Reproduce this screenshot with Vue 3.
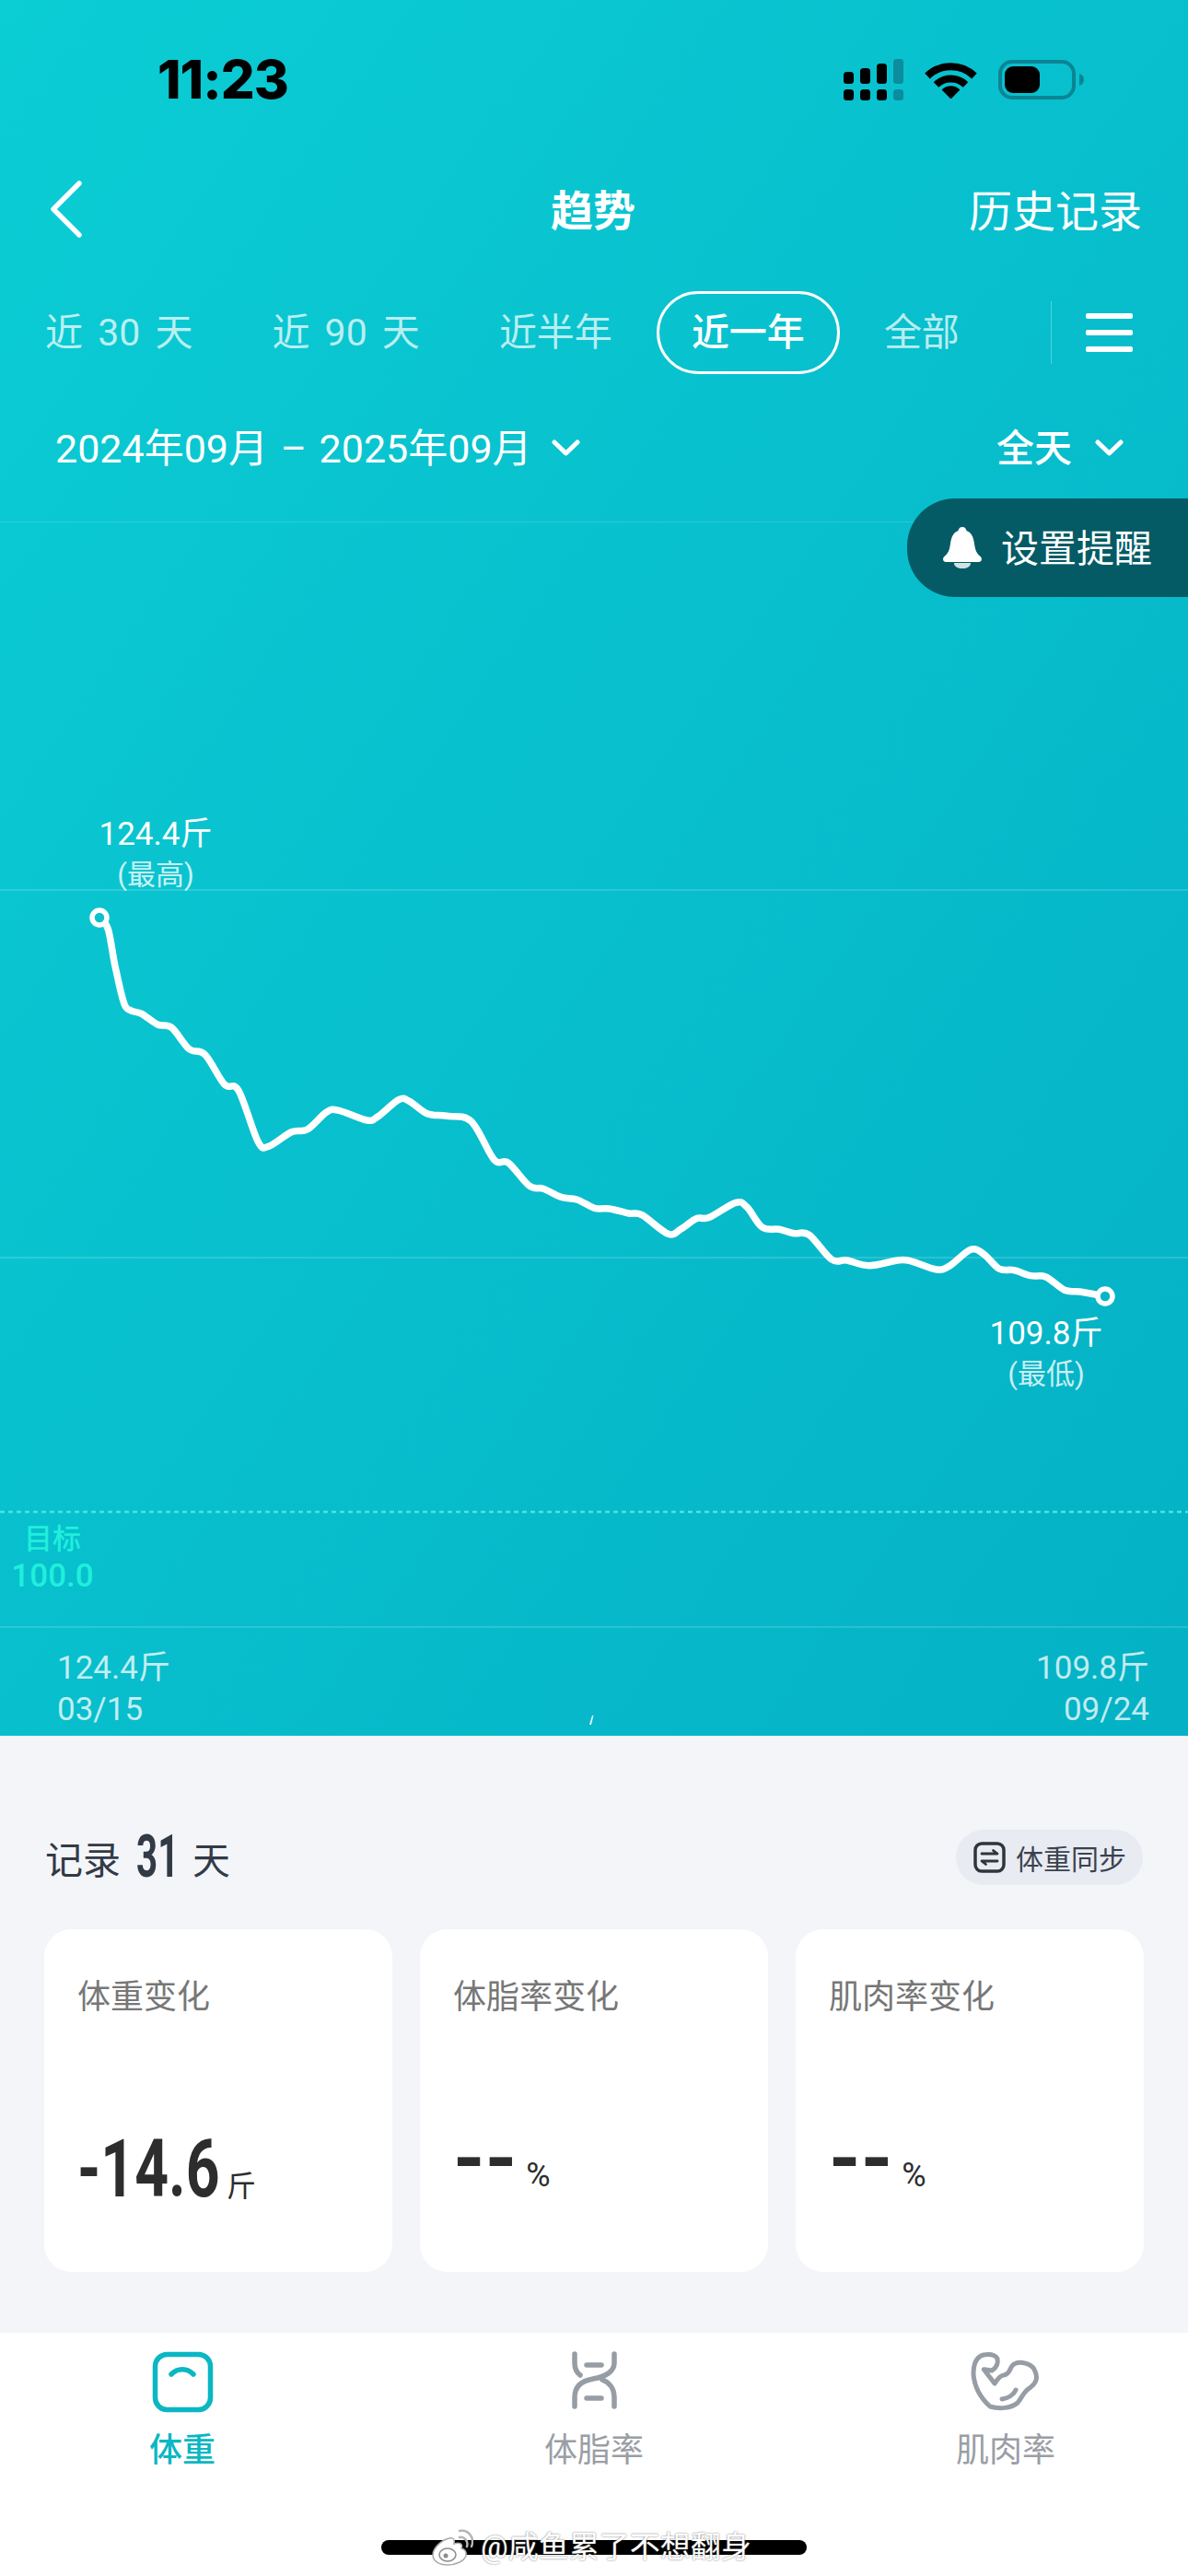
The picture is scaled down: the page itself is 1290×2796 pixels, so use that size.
<template>
    <div class="page">
        <div class="panel">
            <div class="status">
                <span class="time">11:23</span>
                <div class="status-icons">
                    <svg width="65" height="45" viewBox="0 0 65 45">
                        <rect v-for="b in signalBars" :key="b.x + '-' + b.y" :x="b.x" :y="b.y" width="11" :height="b.h" rx="3.5" :fill="b.dim ? '#0b8d9e' : '#000'" />
                    </svg>
                    <svg width="57" height="42" viewBox="0 0 57 42">
                        <path d="M3 17.5A37 37 0 0 1 54 17.5" fill="none" stroke="#000" stroke-width="8" />
                        <path d="M12.5 27A23 23 0 0 1 44.500 27" fill="none" stroke="#000" stroke-width="8" />
                        <path d="M28.500 41L20 32.500A13 13 0 0 1 37 32.500Z" fill="#000" stroke="#000" stroke-width="2" stroke-linejoin="round" />
                    </svg>
                    <svg width="93" height="43" viewBox="0 0 93 43">
                        <rect x="2" y="2" width="80" height="39" rx="13" fill="none" stroke="#0b8494" stroke-width="4" />
                        <rect x="7" y="7" width="38" height="29" rx="9" fill="#000" />
                        <path d="M88 15C91 16 93 18 93 21.500C93 25 91 27 88 28Z" fill="#0b8494" />
                    </svg>
                </div>
            </div>

            <div class="nav">
                <svg class="back" width="36" height="62" viewBox="0 0 36 62">
                    <path d="M32 3L4 31L32 59" fill="none" stroke="#fff" stroke-width="5.500" stroke-linecap="round" stroke-linejoin="round" />
                </svg>
                <div class="title">趋势</div>
                <div class="history">历史记录</div>
            </div>

            <div class="periods">
                <div v-for="p in periods" :key="p" class="period" :class="{ active: p === activePeriod }">{{ p }}</div>
                <div class="menu">
                    <span></span>
                    <span></span>
                    <span></span>
                </div>
            </div>

            <div class="dates">
                <div class="date-pick">
                    <span>2024年09月 – 2025年09月</span>
                    <svg class="caret" width="31" height="19" viewBox="0 0 31 19">
                        <path d="M3 3L15.500 15L28 3" fill="none" stroke="#fff" stroke-width="5" stroke-linecap="round" stroke-linejoin="round" />
                    </svg>
                </div>
                <div class="date-pick day">
                    <span>全天</span>
                    <svg class="caret" width="31" height="19" viewBox="0 0 31 19">
                        <path d="M3 3L15.500 15L28 3" fill="none" stroke="#fff" stroke-width="5" stroke-linecap="round" stroke-linejoin="round" />
                    </svg>
                </div>
            </div>

            <div class="chart">
                <svg class="plot" width="1290" height="1320" viewBox="0 564 1290 1320">
                    <line v-for="y in gridLines" :key="y" x1="0" x2="1290" :y1="y" :y2="y" stroke="rgba(255,255,255,0.2)" stroke-width="1.500" />
                    <line x1="0" x2="1290" y1="1639" y2="1639" stroke="#45e6df" stroke-width="2.500" stroke-dasharray="5 4" />
                    <path :d="linePath" fill="none" stroke="#fff" stroke-width="7.500" stroke-linecap="round" stroke-linejoin="round" />
                    <circle cx="108" cy="994" r="8" fill="#0bc1cd" stroke="#fff" stroke-width="5.500" />
                    <circle cx="1200" cy="1405" r="8" fill="#05b7c8" stroke="#fff" stroke-width="5.500" />
                    <path d="M640 1870L643 1860L644.500 1860L642 1870Z" fill="#e8fbfc" />
                </svg>

                <div class="reminder">
                    <svg width="50" height="50" viewBox="40 32 50 50">
                        <path d="M65 34C68 34 69 36 69.500 38C75 40 77 45 78 52C79 60 81 63 84.500 66C87 68 86 72 83 72H47C44 72 43 68 45.500 66C49 63 51 60 52 52C53 45 55 40 60.500 38C61 36 62 34 65 34Z" fill="#fff" />
                        <path d="M56 73H74C74 77 70 79 65 79C60 79 56 77 56 73Z" fill="#cfe3e5" />
                    </svg>
                    <span>设置提醒</span>
                </div>

                <div class="peak high">
                    <div class="peak-value">124.4斤</div>
                    <div class="peak-note">(最高)</div>
                </div>
                <div class="peak low">
                    <div class="peak-value">109.8斤</div>
                    <div class="peak-note">(最低)</div>
                </div>

                <div class="goal">
                    <div>目标</div>
                    <div class="goal-value">100.0</div>
                </div>

                <div class="range start">
                    <div>124.4斤</div>
                    <div>03/15</div>
                </div>
                <div class="range end">
                    <div>109.8斤</div>
                    <div>09/24</div>
                </div>
            </div>
        </div>

        <div class="summary">
            <div class="summary-head">
                <div class="days">
                    <span>记录</span>
                    <span class="days-num">31</span>
                    <span>天</span>
                </div>
                <div class="sync">
                    <svg width="35" height="34" viewBox="0 0 35 34">
                        <rect x="2" y="2" width="31" height="30" rx="7" fill="none" stroke="#30353d" stroke-width="3.500" />
                        <path d="M9 13H26L21.500 9.500M26 21H9L13.500 24.500" fill="none" stroke="#30353d" stroke-width="2.800" stroke-linecap="round" stroke-linejoin="round" />
                    </svg>
                    <span>体重同步</span>
                </div>
            </div>
            <div class="cards">
                <div v-for="c in cards" :key="c.title" class="card">
                    <div class="card-title">{{ c.title }}</div>
                    <div class="card-value" :class="{ empty: !c.value }">
                        <span v-if="c.value" class="num">{{ c.value }}</span>
                        <span v-else class="dash">--</span>
                        <span class="unit">{{ c.unit }}</span>
                    </div>
                </div>
            </div>
        </div>

        <div class="tabbar">
            <div class="tab active">
                <svg width="100" height="90" viewBox="-2 0 100 90">
                    <rect x="18.500" y="15.500" width="60" height="60" rx="13" fill="none" stroke="#0ab7c3" stroke-width="5.500" />
                    <path d="M36 37C43 30 53 30 60 37" fill="none" stroke="#0ab7c3" stroke-width="5.500" stroke-linecap="round" />
                </svg>
                <span>体重</span>
            </div>
            <div class="tab">
                <svg width="100" height="90" viewBox="-4 0 100 90">
                    <path d="M25 72V62C25 50 33 44 45 42C58 40 68 34 68 25V15M25 15V25C25 31 27 35 31 38M55 43C63 46 68 53 68 62V72" fill="none" stroke="#979da5" stroke-width="5.500" stroke-linecap="round" />
                    <path d="M38 27H54M38 63H54" fill="none" stroke="#979da5" stroke-width="5.500" stroke-linecap="round" />
                </svg>
                <span>体脂率</span>
            </div>
            <div class="tab">
                <svg width="100" height="90" viewBox="2 0 100 90">
                    <path d="M28.300 31.700L37 33C42 30 44 25 43 20C40 15 34 15 28 16C20 18 17 27 17 37C18 50 24 62 35 72C45 75 58 74 65 68C70 62 72 55 78 52C86 46 88 40 82 30C76 24 64 22 59 28C56 32 56 37 50 38C46 38 42 44 40 47Z" fill="none" stroke="#979da5" stroke-width="5" stroke-linejoin="round" />
                    <path d="M48 64C55 63 61 59 63 54" fill="none" stroke="#979da5" stroke-width="5" stroke-linecap="round" />
                </svg>
                <span>肌肉率</span>
            </div>

            <div class="home-bar"></div>
            <div class="watermark">
                <svg width="48" height="42" viewBox="0 0 48 42">
                    <path d="M4 29C4 22 13 13 22 11C27 10 28 13 27 17C33 15 37 17 35 22C39 23 41 26 40 30C38 36 29 40 20 40C11 40 4 36 4 29Z" fill="#fff" stroke="#a9a9a9" stroke-width="1.500" />
                    <ellipse cx="20" cy="29" rx="9" ry="7" fill="#fff" stroke="#8d8d8d" stroke-width="1.500" />
                    <circle cx="18" cy="30" r="2.500" fill="#8d8d8d" />
                    <path d="M33 10C38 9 43 14 41 20M33 3C42 1 50 10 46 20" fill="none" stroke="#b5b5b5" stroke-width="2.500" stroke-linecap="round" />
                </svg>
                <span>@咸鱼累了不想翻身</span>
            </div>
        </div>
    </div>
</template>

<script setup>
const activePeriod = "近一年";
const periods = ["近 30 天", "近 90 天", "近半年", "近一年", "全部"];

const gridLines = [564, 964, 1363, 1764];

const signalBars = [
    { x: 0, y: 14, h: 13 },
    { x: 18, y: 10, h: 17 },
    { x: 36, y: 5, h: 22 },
    { x: 54, y: 0, h: 27, dim: true },
    { x: 0, y: 33, h: 12 },
    { x: 18, y: 33, h: 12 },
    { x: 36, y: 33, h: 12 },
    { x: 54, y: 33, h: 12, dim: true },
];

const cards = [
    { title: "体重变化", value: "-14.6", unit: "斤" },
    { title: "体脂率变化", value: "", unit: "%" },
    { title: "肌肉率变化", value: "", unit: "%" },
];

const points = [
    [108, 994], [117.4, 1006.7], [125, 1046.7], [134.6, 1086.7], [142.3, 1095], [153.8, 1098.3],
    [171, 1110], [186.3, 1113.3], [205.4, 1136.7], [222.6, 1142.7], [243.7, 1175], [259, 1181.7],
    [280, 1236.7], [291.5, 1242.3], [316.4, 1226.7], [333.6, 1224], [354.7, 1205], [368, 1203.3],
    [398.7, 1214], [410.2, 1210], [433, 1191.7], [444.6, 1193.3], [463.7, 1206.7], [484.8, 1209.3],
    [511.6, 1215], [536.5, 1256.7], [551.8, 1260], [574.7, 1285], [590, 1288.3], [609, 1297.3],
    [626.4, 1300], [645.5, 1309.3], [662, 1310], [682.7, 1315], [697, 1316.7], [725.5, 1337.3],
    [739.8, 1331.7], [756, 1320.7], [770.4, 1319.3], [799, 1303.3], [811.2, 1308.3], [827.6, 1330],
    [846, 1332.3], [862.2, 1336.7], [878.6, 1338.3], [903, 1365], [919.4, 1366], [944, 1371.7],
    [976.5, 1365.7], [990.8, 1367.3], [1017.3, 1376], [1031.6, 1371.7], [1054, 1354.3], [1068.4, 1359.3],
    [1084.7, 1375], [1101, 1376.7], [1119.4, 1382.7], [1135.7, 1384], [1156, 1398.3], [1172.4, 1400],
    [1200, 1405],
];

// catmull-rom through the points so the line stays smooth
function smooth(pts) {
    let d = `M${pts[0][0]} ${pts[0][1]}`;
    for (let i = 0; i < pts.length - 1; i++) {
        const p0 = pts[i - 1] || pts[i];
        const p1 = pts[i];
        const p2 = pts[i + 1];
        const p3 = pts[i + 2] || p2;
        const c1x = p1[0] + (p2[0] - p0[0]) / 6;
        const c1y = p1[1] + (p2[1] - p0[1]) / 6;
        const c2x = p2[0] - (p3[0] - p1[0]) / 6;
        const c2y = p2[1] - (p3[1] - p1[1]) / 6;
        d += `C${c1x.toFixed(1)} ${c1y.toFixed(1)} ${c2x.toFixed(1)} ${c2y.toFixed(1)} ${p2[0]} ${p2[1]}`;
    }
    return d;
}

const linePath = smooth(points);
</script>

<style>
html,
body {
    margin: 0;
    background: #fff;
}
</style>

<style scoped>
.page {
    width: 1290px;
    height: 2796px;
    overflow: hidden;
    font-family: Roboto, "Noto Sans CJK SC", sans-serif;
    background: #fff;
}
.panel {
    height: 1884px;
    display: flex;
    flex-direction: column;
    color: #fff;
    background: linear-gradient(125deg, #0bcdd4 0%, #08bfcd 50%, #04b1c5 100%);
}
.status {
    height: 172px;
    display: flex;
    align-items: center;
    justify-content: space-between;
    padding: 0 113px 0 171px;
    flex-shrink: 0;
}
.time {
    font-family: Inter, sans-serif;
    font-size: 58px;
    font-weight: 800;
    color: #000;
    letter-spacing: -1px;
}
.status-icons {
    display: flex;
    align-items: center;
    gap: 23px;
}
.nav {
    height: 116px;
    display: grid;
    grid-template-columns: 1fr auto 1fr;
    align-items: center;
    padding: 0 50px 0 48px;
    flex-shrink: 0;
}
.back {
    margin: 0 0 6px 6px;
}
.title {
    margin-bottom: 10px;
    font-size: 46px;
    font-weight: 700;
}
.history {
    margin-bottom: 10px;
    font-size: 47px;
    text-align: right;
}
.periods {
    height: 90px;
    margin-top: 28px;
    display: flex;
    align-items: center;
    gap: 10px;
    padding: 0 60px 0 11px;
    flex-shrink: 0;
}
.period {
    height: 90px;
    box-sizing: border-box;
    line-height: 84px;
    padding: 0 35px;
    font-size: 41px;
    word-spacing: 6px;
    color: rgba(255, 255, 255, 0.72);
    border: 3px solid transparent;
    border-radius: 45px;
    white-space: nowrap;
}
.period.active {
    font-weight: 500;
    color: #fff;
    border-color: #fff;
}
.menu {
    margin-left: auto;
    height: 68px;
    padding-left: 37px;
    border-left: 1.5px solid rgba(255, 255, 255, 0.3);
    display: flex;
    flex-direction: column;
    justify-content: center;
    gap: 12px;
}
.menu span {
    display: block;
    width: 51px;
    height: 6px;
    border-radius: 2px;
    background: #fff;
}
.dates {
    height: 60px;
    margin-top: 52px;
    display: flex;
    align-items: center;
    justify-content: space-between;
    padding: 0 70px 0 60px;
    flex-shrink: 0;
}
.date-pick {
    display: flex;
    align-items: center;
    gap: 21px;
    font-size: 43px;
    word-spacing: 3px;
}
.date-pick span {
    margin-bottom: 10px;
}
.date-pick.day {
    gap: 25px;
    font-size: 41px;
    font-weight: 500;
}
.caret {
    margin-top: -4px;
}
.chart {
    position: relative;
    height: 1320px;
    margin-top: 48px;
}
.plot {
    position: absolute;
    top: 0;
    left: 0;
}
.reminder {
    position: absolute;
    top: -25px;
    right: 0;
    width: 305px;
    height: 107px;
    box-sizing: border-box;
    padding-left: 35px;
    display: flex;
    align-items: center;
    gap: 17px;
    font-size: 41px;
    background: #045b66;
    border-radius: 52px 0 0 52px;
}
.reminder span {
    margin-bottom: 5px;
}
.peak {
    position: absolute;
    text-align: center;
}
.peak.high {
    left: 87px;
    top: 317px;
    width: 164px;
}
.peak.low {
    left: 1054px;
    top: 859px;
    width: 164px;
}
.peak-value {
    font-size: 35px;
    line-height: 46px;
}
.peak-note {
    font-size: 31px;
    line-height: 42px;
    color: rgba(255, 255, 255, 0.8);
}
.goal {
    position: absolute;
    left: 0;
    top: 1085px;
    width: 114px;
    text-align: center;
    font-size: 31px;
    font-weight: 500;
    line-height: 40px;
    color: #1fefdc;
}
.goal-value {
    font-size: 35px;
    font-weight: 500;
}
.range {
    position: absolute;
    top: 1222px;
    font-size: 35px;
    line-height: 45px;
    color: rgba(255, 255, 255, 0.75);
}
.range.start {
    left: 62px;
}
.range.end {
    right: 42px;
    text-align: right;
}
.summary {
    height: 648px;
    box-sizing: border-box;
    padding: 102px 49px 0 48px;
    background: #f4f5f9;
}
.summary-head {
    height: 60px;
    display: flex;
    align-items: center;
    justify-content: space-between;
}
.days {
    margin-left: 1px;
    display: flex;
    align-items: center;
    font-size: 41px;
    color: #323a46;
}
.days-num {
    display: inline-block;
    width: 45px;
    margin: 0 16px 0 17px;
    font-size: 64px;
    font-weight: 700;
    line-height: 60px;
    transform: scaleX(0.63);
    transform-origin: left;
}
.sync {
    height: 60px;
    box-sizing: border-box;
    padding: 0 18px 0 19px;
    display: flex;
    align-items: center;
    gap: 11px;
    font-size: 30px;
    color: #3a424e;
    background: #e9ebf2;
    border-radius: 30px;
}
.cards {
    margin-top: 48px;
    display: grid;
    grid-template-columns: repeat(3, 378px);
    gap: 30px;
}
.card {
    height: 372px;
    box-sizing: border-box;
    padding: 50px 36px 0;
    display: flex;
    flex-direction: column;
    background: #fff;
    border-radius: 30px;
}
.card-title {
    font-size: 36px;
    line-height: 48px;
    color: #777;
}
.card-value {
    margin-top: auto;
    margin-bottom: 68px;
    display: flex;
    align-items: baseline;
    color: #2d2d2d;
}
.card-value.empty {
    margin-bottom: 79px;
}
.num {
    display: inline-block;
    width: 151px;
    margin-right: 11px;
    font-size: 88px;
    font-weight: 700;
    line-height: 88px;
    white-space: nowrap;
    transform: scaleX(0.73);
    transform-origin: left;
}
.dash {
    margin-right: 10px;
    font-size: 88px;
    font-weight: 700;
    line-height: 88px;
}
.unit {
    font-size: 32px;
}
.card-value.empty .unit {
    font-size: 36px;
}
.tabbar {
    position: relative;
    height: 264px;
    box-sizing: border-box;
    padding: 8px 128px 0;
    display: flex;
    justify-content: space-between;
    background: #fff;
}
.tab {
    width: 140px;
    display: flex;
    flex-direction: column;
    align-items: center;
    font-size: 36px;
    color: #9a9ea5;
}
.tab.active {
    font-weight: 500;
    color: #0ab7c3;
}
.tab svg {
    display: block;
}
.tab span {
    line-height: 48px;
    margin-top: 6px;
}
.home-bar {
    position: absolute;
    left: 414px;
    top: 225px;
    width: 462px;
    height: 16px;
    border-radius: 8px;
    background: #000;
}
.watermark {
    position: absolute;
    left: 466px;
    top: 209px;
    display: flex;
    align-items: center;
    gap: 8px;
    font-size: 33px;
    line-height: 48px;
    color: #fff;
    text-shadow: 0 0 2px rgba(90, 90, 90, 0.9);
}
</style>
